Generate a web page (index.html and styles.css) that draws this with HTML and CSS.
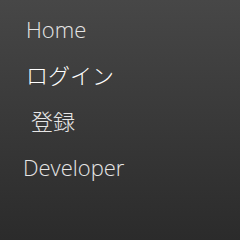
FILE: index.html
```html
<!DOCTYPE html>
<html lang="ja">
<head>
    <meta charset="UTF-8">
    <meta name="viewport" content="width=device-width, initial-scale=1.0">
    <title>Menu</title>
    <link rel="stylesheet" href="styles.css">
</head>
<body>
    <nav class="menu">
        <a class="menu-item" href="#">Home</a>
        <a class="menu-item menu-item--active" href="#">ログイン</a>
        <a class="menu-item menu-item--indent" href="#">登録</a>
        <a class="menu-item menu-item--dev" href="#">Developer</a>
    </nav>
</body>
</html>
```

FILE: styles.css
```css
html, body {
    height: 100%;
}

body {
    margin: 0;
    background: linear-gradient(to bottom, #474747, #2b2b2b);
    font-family: 'Open Sans', 'Noto Sans CJK JP', sans-serif;
    font-weight: 300;
    overflow: hidden;
}

.menu {
    display: flex;
    flex-direction: column;
    padding-top: 6px;
}

.menu-item {
    display: block;
    height: 46px;
    line-height: 46px;
    padding-left: 26px;
    font-size: 22px;
    color: #e6e6e6;
    text-decoration: none;
}

.menu-item--active {
    color: #ffffff;
}

.menu-item--indent {
    padding-left: 31px;
}

.menu-item--dev {
    padding-left: 23px;
}
```
